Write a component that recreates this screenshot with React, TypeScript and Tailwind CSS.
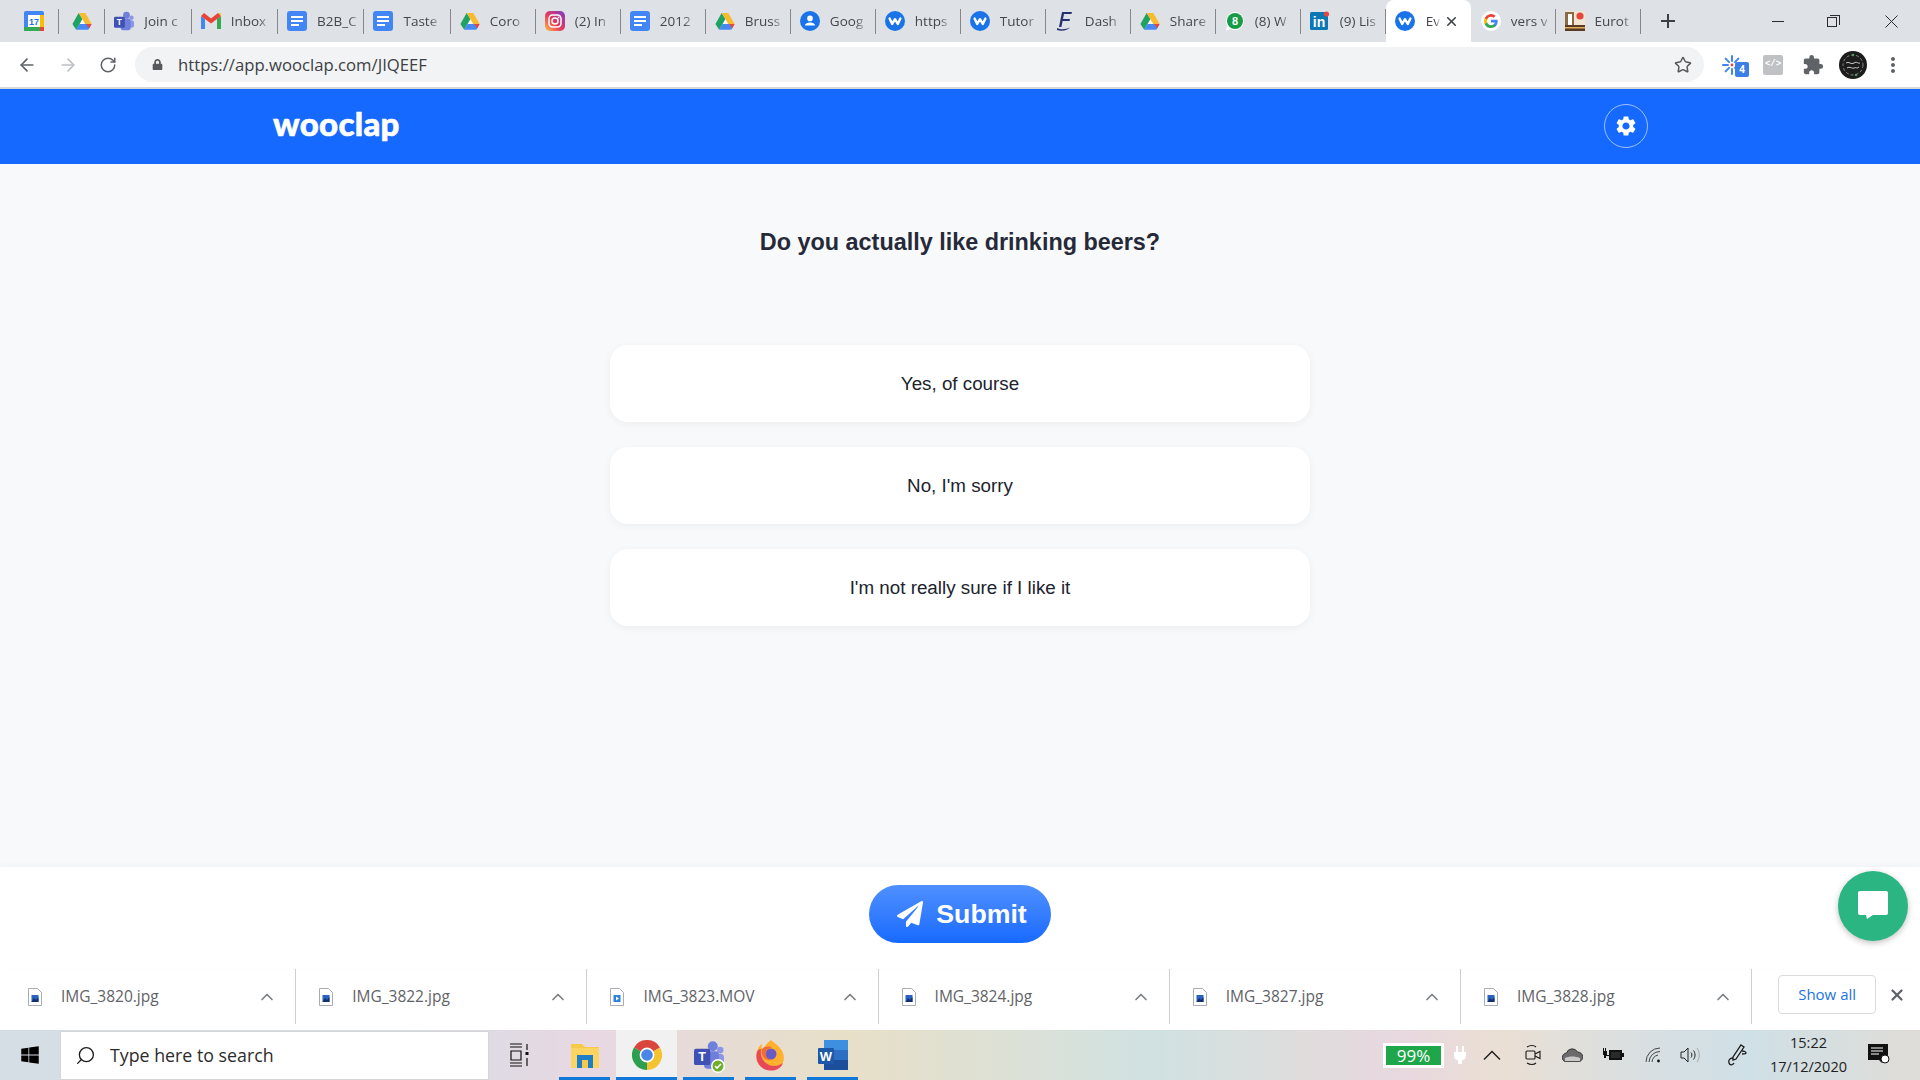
import { ArrowLeft, ArrowRight, ChevronUp, RotateCw, Search, Star, X } from "lucide-react";
import { FaLock, FaPaperPlane, FaWindows } from "react-icons/fa";
import { MdExtension, MdMoreVert, MdSettings } from "react-icons/md";

function Drive() {
  return (
    <svg width="20" height="18" viewBox="0 0 24 21">
      <polygon points="12.5,8 16,14 9,14" fill="#fff" />
      <polygon points="8,1 12.5,8 5,21 0.5,14" fill="#1ea362" />
      <polygon points="8,1 16,1 23.5,14 16,14" fill="#f9bb2d" />
      <polygon points="5,21 9,14 23.5,14 19.5,21" fill="#4688f4" />
      <polygon points="17,14 23.5,14 20.5,19.5" fill="#e8453c" />
    </svg>
  );
}

function Doc() {
  return (
    <svg width="20" height="20" viewBox="0 0 20 20">
      <rect width="20" height="20" rx="3" fill="#4285f4" />
      <rect x="4" y="5" width="12" height="2" fill="#fff" />
      <rect x="4" y="9" width="12" height="2" fill="#fff" />
      <rect x="4" y="13" width="8" height="2" fill="#fff" />
    </svg>
  );
}

function Calendar() {
  return (
    <svg width="20" height="20" viewBox="0 0 20 20">
      <rect width="20" height="20" rx="2" fill="#4285f4" />
      <rect x="4" y="4" width="12" height="12" fill="#fff" />
      <rect x="16" y="4" width="4" height="12" fill="#fbbc04" />
      <rect y="16" width="16" height="4" fill="#34a853" />
      <rect x="16" y="16" width="4" height="4" fill="#ea4335" />
      <text x="10" y="14" textAnchor="middle" fontSize="9" fontWeight="700" fontFamily="Liberation Sans, sans-serif" fill="#1a73e8">17</text>
    </svg>
  );
}

function Teams({ size = 20 }: { size?: number }) {
  return (
    <svg width={size} height={size} viewBox="0 0 24 24">
      <circle cx="15" cy="5" r="4" fill="#6f7fdc" />
      <circle cx="21" cy="8" r="2.6" fill="#8b97e6" />
      <rect x="17" y="11" width="7" height="9" rx="3" fill="#8b97e6" />
      <rect x="8" y="9" width="12" height="14" rx="3" fill="#6f7fdc" />
      <rect x="0" y="7" width="13" height="13" rx="1.5" fill="#3f51b5" />
      <text x="6.5" y="17" textAnchor="middle" fontSize="10" fontWeight="700" fontFamily="Liberation Sans, sans-serif" fill="#fff">T</text>
    </svg>
  );
}

function Gmail() {
  return (
    <svg width="20" height="16" viewBox="0 0 20 16">
      <path d="M0 3v13h4V6z" fill="#4285f4" />
      <path d="M16 6v10h4V3z" fill="#34a853" />
      <path d="M0 3 10 10.5 20 3 17 0 10 5.5 3 0z" fill="#ea4335" />
      <path d="M20 3 17 0h1.5A1.5 1.5 0 0 1 20 1.5z" fill="#fbbc04" />
    </svg>
  );
}

function Instagram() {
  return (
    <svg width="20" height="20" viewBox="0 0 20 20">
      <defs>
        <linearGradient id="ig" x1="0" y1="1" x2="1" y2="0">
          <stop offset="0" stopColor="#fdc14a" />
          <stop offset="0.45" stopColor="#e8385a" />
          <stop offset="1" stopColor="#7d3cc8" />
        </linearGradient>
      </defs>
      <rect width="20" height="20" rx="5" fill="url(#ig)" />
      <rect x="4" y="4" width="12" height="12" rx="3.5" fill="none" stroke="#fff" strokeWidth="1.5" />
      <circle cx="10" cy="10" r="3" fill="none" stroke="#fff" strokeWidth="1.5" />
      <circle cx="13.6" cy="6.4" r="0.9" fill="#fff" />
    </svg>
  );
}

function WooIcon() {
  return (
    <svg width="20" height="20" viewBox="0 0 20 20">
      <circle cx="10" cy="10" r="10" fill="#1a73e8" />
      <polyline points="4.6,7.5 7.2,13 10,8.2 12.8,13 15.4,7.5" fill="none" stroke="#fff" strokeWidth="2.4" strokeLinejoin="round" strokeLinecap="round" />
    </svg>
  );
}

function Contacts() {
  return (
    <svg width="20" height="20" viewBox="0 0 20 20">
      <circle cx="10" cy="10" r="10" fill="#1a73e8" />
      <circle cx="10" cy="7.4" r="2.8" fill="#fff" />
      <path d="M5 14.6c0-2.4 2.6-3.2 5-3.2s5 .8 5 3.2z" fill="#fff" />
    </svg>
  );
}

function DashIcon() {
  return (
    <svg width="16" height="20" viewBox="0 0 16 20">
      <path d="M5 1h10l-.6 2H7l-1 5h7l-.5 2H5.6l-1.2 6H2z" fill="#27306f" />
      <path d="M0 17c4 2 9 1.4 13-.4C11 19 5 21 0 19z" fill="#27306f" />
    </svg>
  );
}

function Whatsapp() {
  return (
    <svg width="20" height="20" viewBox="0 0 20 20">
      <path d="M10 1a9 9 0 0 0-7.7 13.6L1 19.4l4.9-1.3A9 9 0 1 0 10 1z" fill="#fff" />
      <circle cx="10" cy="10" r="8" fill="#169c47" />
      <text x="10" y="14" textAnchor="middle" fontSize="11" fontWeight="700" fontFamily="Liberation Sans, sans-serif" fill="#fff">8</text>
    </svg>
  );
}

function Linkedin() {
  return (
    <svg width="20" height="20" viewBox="0 0 20 20">
      <rect y="1" width="18" height="18" rx="1.5" fill="#0a78b5" />
      <text x="9" y="16" textAnchor="middle" fontSize="14" fontWeight="700" fontFamily="Liberation Sans, sans-serif" fill="#fff">in</text>
      <circle cx="16.5" cy="3" r="2.6" fill="#e8453c" />
    </svg>
  );
}

function Google() {
  return (
    <svg width="20" height="20" viewBox="0 0 20 20">
      <circle cx="10" cy="10" r="10" fill="#fff" />
      <g transform="translate(3 3) scale(0.583)">
        <path d="M23.5 12.3c0-.8-.1-1.6-.2-2.3H12v4.4h6.5a5.5 5.5 0 0 1-2.4 3.6v3h3.9c2.2-2.1 3.5-5.1 3.5-8.7z" fill="#4285f4" />
        <path d="M12 24c3.2 0 6-1.1 8-2.9l-3.9-3c-1.1.7-2.5 1.2-4.1 1.2-3.1 0-5.8-2.1-6.7-5H1.3v3.1A12 12 0 0 0 12 24z" fill="#34a853" />
        <path d="M5.3 14.3a7.2 7.2 0 0 1 0-4.6V6.6h-4a12 12 0 0 0 0 10.8z" fill="#fbbc05" />
        <path d="M12 4.8c1.8 0 3.3.6 4.6 1.8l3.4-3.4A12 12 0 0 0 1.3 6.6l4 3.1c.9-2.9 3.6-4.9 6.7-4.9z" fill="#ea4335" />
      </g>
    </svg>
  );
}

function Eurot() {
  return (
    <svg width="20" height="20" viewBox="0 0 20 20">
      <rect width="20" height="20" fill="#f2e6d2" />
      <rect x="0" y="1" width="9" height="13" fill="#8b6a43" />
      <rect x="3" y="3" width="4" height="11" fill="#fff" />
      <rect y="14" width="20" height="6" fill="#5a3a20" />
      <rect y="16" width="20" height="1.5" fill="#e0b060" />
      <circle cx="15" cy="5" r="3.6" fill="#e8453c" />
    </svg>
  );
}

// the first four titled tabs are a touch wider than the rest in the reference
const tabs = [
  { w: "w-[46.6px]", icon: <Drive />, pinned: true },
  { title: "Join c", w: "w-[86.4px]", icon: <Teams /> },
  { title: "Inbox", w: "w-[86.4px]", icon: <Gmail /> },
  { title: "B2B_C", w: "w-[86.4px]", icon: <Doc /> },
  { title: "Taste", w: "w-[86.4px]", icon: <Doc /> },
  { title: "Coro", icon: <Drive /> },
  { title: "(2) In", icon: <Instagram /> },
  { title: "2012", icon: <Doc /> },
  { title: "Bruss", icon: <Drive /> },
  { title: "Goog", icon: <Contacts /> },
  { title: "https", icon: <WooIcon /> },
  { title: "Tutor", icon: <WooIcon /> },
  { title: "Dash", icon: <DashIcon /> },
  { title: "Share", icon: <Drive /> },
  { title: "(8) W", icon: <Whatsapp /> },
  { title: "(9) Lis", icon: <Linkedin /> },
];

function Tab({ title, icon, w, pinned }: { title?: string; icon: React.ReactNode; w?: string; pinned?: boolean }) {
  return (
    <div className={`relative flex h-[42px] shrink-0 items-center ${pinned ? "justify-center" : "pl-[9px]"} ${w ?? "w-[85px]"}`}>
      <div className="flex w-5 shrink-0 justify-center">{icon}</div>
      {title && (
        <div className="ml-[10px] whitespace-nowrap text-[13.5px] text-[#45474b] [mask-image:linear-gradient(90deg,#000_78%,#0006_100%)]">
          {title}
        </div>
      )}
      <div className="absolute right-0 top-[9px] h-[25px] w-px bg-[#85878b]" />
    </div>
  );
}

function FileIcon({ video }: { video?: boolean }) {
  return (
    <svg width="14" height="18" viewBox="0 0 14 18" className="shrink-0">
      <path d="M.5.5h9l4 4v13H.5z" fill="#fff" stroke="#a9adb3" />
      <rect x="3.5" y="7" width="7" height="7" fill={video ? "#2b83dc" : "#2a62c0"} />
      {video ? <polygon points="6,8.5 9,10.5 6,12.5" fill="#fff" /> : <polygon points="3.5,14 6,10 8,12 10.5,9 10.5,14" fill="#142f70" />}
    </svg>
  );
}

const downloads = [
  { name: "IMG_3820.jpg" },
  { name: "IMG_3822.jpg" },
  { name: "IMG_3823.MOV", video: true },
  { name: "IMG_3824.jpg" },
  { name: "IMG_3827.jpg" },
  { name: "IMG_3828.jpg" },
];

const answers = ["Yes, of course", "No, I'm sorry", "I'm not really sure if I like it"];

function Chrome() {
  return (
    <svg width="30" height="30" viewBox="0 0 30 30">
      <path d="M15 15 2 7.5A15 15 0 0 1 28 7.5z" fill="#d9473c" />
      <path d="M15 15 28 7.5A15 15 0 0 1 15 30z" fill="#f4c430" />
      <path d="M15 15 15 30A15 15 0 0 1 2 7.5z" fill="#2e9e4f" />
      <circle cx="15" cy="15" r="7.4" fill="#fff" />
      <circle cx="15" cy="15" r="5.8" fill="#4a86e8" />
    </svg>
  );
}

function Firefox() {
  return (
    <svg width="30" height="32" viewBox="0 0 30 32">
      <path d="M15 1c3 3 6 4 9 8 5 6 5 13 1 17-4 5-12 6-18 3C1 26-1 19 1 12c1-3 3-6 5-7-1 3 0 5 1 6 1-4 4-7 8-10z" fill="#ffb02e" />
      <path d="M1 13c-2 8 2 16 10 18 7 2 14-1 16-7-5 4-13 4-17 0-4-3-6-8-5-14-2 0-3 1-4 3z" fill="#e8485c" />
      <circle cx="15" cy="15" r="5.5" fill="#6a5bc4" />
      <path d="M6 10c3-3 8-3 10-1-3 0-5 1-6 4-1 4 2 8 6 8-5 1-9-2-10-6-.5-2-.5-3 0-5z" fill="#ef6b3a" />
    </svg>
  );
}

function Word() {
  return (
    <svg width="30" height="32" viewBox="0 0 30 32">
      <rect x="6" y="1" width="24" height="10" fill="#3f8fe0" />
      <rect x="6" y="11" width="24" height="10" fill="#2a6fc4" />
      <rect x="6" y="21" width="24" height="10" fill="#1b4e9b" />
      <rect x="0" y="9" width="16" height="16" rx="1" fill="#1d57a8" />
      <text x="8" y="22" textAnchor="middle" fontSize="13" fontWeight="700" fontFamily="Liberation Sans, sans-serif" fill="#fff">W</text>
    </svg>
  );
}

function Explorer() {
  return (
    <svg width="28" height="26" viewBox="0 0 28 26">
      <path d="M0 2h11l3 3h14v21H0z" fill="#f7c948" />
      <rect x="0" y="6" width="28" height="20" fill="#fcd462" />
      <path d="M6 26V13h16v13h-5v-8h-6v8z" fill="#1c7fc7" />
      <rect x="11" y="18" width="6" height="8" fill="#f7c948" />
    </svg>
  );
}

function TaskSlot({ className, children }: { className: string; children: React.ReactNode }) {
  return <div className={`relative flex h-full shrink-0 items-center justify-center ${className}`}>{children}</div>;
}

function Underline() {
  return <div className="absolute bottom-0 left-0 right-0 h-[3px] bg-[#0f78d8]" />;
}

export default function App() {
  return (
    <div className="flex h-[1080px] w-[1920px] flex-col overflow-hidden bg-white font-['Open_Sans',sans-serif]">
      {/* tab strip */}
      <div className="flex h-[42px] shrink-0 items-center bg-[#dee1e6]">
        <div className="relative flex h-[42px] w-[58.7px] shrink-0 items-center pl-6">
          <Calendar />
          <div className="absolute right-0 top-[9px] h-[25px] w-px bg-[#85878b]" />
        </div>
        {tabs.map((t, i) => (
          <Tab key={i} title={t.title} icon={t.icon} w={t.w} pinned={t.pinned} />
        ))}
        <div className="relative flex h-[42px] w-[85px] shrink-0 items-center rounded-t-lg bg-white pl-[9px]">
          <WooIcon />
          <div className="ml-[11px] w-[15px] whitespace-nowrap text-[13.5px] text-[#45474b] [mask-image:linear-gradient(90deg,#000_60%,transparent)]">Ev</div>
          <X size={15} strokeWidth={2.5} className="ml-[3px] text-[#3c4043]" />
        </div>
        <div className="relative flex h-[42px] w-[84.7px] shrink-0 items-center pl-[10px]">
          <Google />
          <div className="ml-[10px] whitespace-nowrap text-[13.5px] text-[#45474b] [mask-image:linear-gradient(90deg,#000_78%,#0006_100%)]">
            vers v
          </div>
          <div className="absolute right-0 top-[9px] h-[25px] w-px bg-[#85878b]" />
        </div>
        <Tab title="Eurot" icon={<Eurot />} />
        <div className="ml-[18px] text-[#3c4043]">
          <svg width="18" height="18" viewBox="0 0 18 18">
            <path d="M9 2v14M2 9h14" stroke="currentColor" strokeWidth="2" />
          </svg>
        </div>
        <div className="ml-[95px] flex h-3 w-3 items-center">
          <div className="h-px w-3 bg-[#2b2b2b]" />
        </div>
        <div className="relative ml-[43px] h-3 w-[13px]">
          <div className="absolute bottom-0 left-0 h-[10px] w-[10px] border border-[#2b2b2b]" />
          <div className="absolute right-0 top-0 h-[10px] w-[10px] border-r border-t border-[#2b2b2b]" />
        </div>
        <svg width="13" height="13" viewBox="0 0 13 13" className="ml-[45px]">
          <path d="M.5.5l12 12M12.5.5l-12 12" stroke="#2b2b2b" strokeWidth="1" />
        </svg>
      </div>

      {/* toolbar */}
      <div className="flex h-[45px] shrink-0 items-center bg-white pl-[7px]">
        <div className="flex w-10 justify-center text-[#5f6368]"><ArrowLeft size={20} /></div>
        <div className="ml-px flex w-10 justify-center text-[#bcbfc3]"><ArrowRight size={20} /></div>
        <div className="ml-px flex w-[38px] justify-center text-[#5f6368]"><RotateCw size={18} /></div>
        <div className="ml-[8px] flex h-[35px] w-[1569px] shrink-0 items-center rounded-full bg-[#f1f3f4] pl-[17px] pr-[12px]">
          <FaLock size={11} className="text-[#55585c]" />
          <span className="ml-[15px] text-[16.7px] text-[#3c4043]">https://app.wooclap.com/JIQEEF</span>
          <Star size={18} className="ml-auto text-[#55585c]" />
        </div>
        <div className="ml-[8px] flex items-center">
          <div className="relative flex w-10 justify-center">
            <svg width="20" height="20" viewBox="0 0 20 20">
              <g stroke="#3f86f0" strokeWidth="2" strokeLinecap="round">
                <path d="M10 1v5M10 14v5M1 10h5M14 10h5M3.6 3.6l3.5 3.5M12.9 12.9l3.5 3.5M16.4 3.6l-3.5 3.5M7.1 12.9l-3.5 3.5" />
              </g>
              <circle cx="10" cy="10" r="1.4" fill="#e8453c" />
            </svg>
            <div className="absolute left-[23px] top-[7px] flex h-[15px] w-[14px] items-center justify-center rounded-[2px] bg-[#3c7fe6] text-[10px] font-bold text-white">4</div>
          </div>
          <div className="ml-px flex w-10 justify-center">
            <div className="flex h-5 w-5 items-center justify-center rounded-[2px] bg-[#bfc1c4] font-['Liberation_Mono',monospace] text-[9px] font-bold text-white">&lt;/&gt;</div>
          </div>
          <div className="flex w-10 justify-center text-[#5f6368]"><MdExtension size={22} /></div>
          <div className="flex w-10 justify-center">
            <svg width="28" height="28" viewBox="0 0 28 28">
              <circle cx="14" cy="14" r="14" fill="#1c1c1c" />
              <circle cx="14" cy="14" r="10" fill="none" stroke="#8a8a8a" strokeWidth="1" strokeDasharray="3 2" />
              <path d="M7 12c3-2 5 2 8 0s4 1 6 0M8 17c3-2 5 1 7 0s3 1 5-1" fill="none" stroke="#cfcfcf" strokeWidth="1" />
              <circle cx="14" cy="4" r="1.2" fill="#49a35a" />
              <circle cx="17" cy="24" r="1.2" fill="#49a35a" />
            </svg>
          </div>
          <div className="flex w-10 justify-center text-[#5f6368]"><MdMoreVert size={24} /></div>
        </div>
      </div>
      <div className="h-[2px] shrink-0 bg-[#d8d8d8]" />

      {/* app header */}
      <header className="flex h-[75px] shrink-0 items-center justify-between bg-[#1669ff] px-[272px] pb-px">
        <div className="-mt-[5px] ml-px font-['Lato',sans-serif] text-[33px] font-black leading-none tracking-[0.3px] text-white [-webkit-text-stroke:0.6px_white]">wooclap</div>
        <div className="flex h-11 w-11 items-center justify-center rounded-full border border-[#9fc1ff]">
          <MdSettings size={24} className="text-white" />
        </div>
      </header>

      {/* question */}
      <main className="flex flex-1 flex-col items-center bg-[#f8f9fb] pt-[62px] font-['Liberation_Sans',sans-serif]">
        <h1 className="text-[23.4px] font-bold leading-8 text-[#262a38]">Do you actually like drinking beers?</h1>
        <div className="mt-[87px] flex w-[700px] flex-col gap-[25px]">
          {answers.map((a) => (
            <div key={a} className="flex h-[77px] items-center justify-center rounded-[18px] bg-white pt-px text-[18.8px] text-[#20232d] shadow-[0_2px_8px_rgba(0,0,0,0.05)]">
              {a}
            </div>
          ))}
        </div>
      </main>

      {/* submit bar */}
      <div className="relative flex h-[101px] shrink-0 items-start justify-center bg-white pt-[18px] shadow-[0_-2px_6px_rgba(0,0,0,0.03)]">
        <button className="flex h-[58px] w-[182px] items-center justify-center gap-[13px] rounded-full bg-gradient-to-b from-[#4f90ff] to-[#1669ff] pl-1 font-['Liberation_Sans',sans-serif] text-[26.7px] font-bold text-white">
          <FaPaperPlane size={26} />
          Submit
        </button>
        <div className="absolute right-3 top-1 flex h-[70px] w-[70px] items-center justify-center rounded-full bg-[#2bb583] shadow-[0_2px_6px_rgba(0,0,0,0.25)]">
          <svg width="32" height="32" viewBox="0 0 32 32">
            <path d="M3 1h26a2 2 0 0 1 2 2v20a2 2 0 0 1-2 2H16l-6 4-1-4H3a2 2 0 0 1-2-2V3a2 2 0 0 1 2-2z" fill="#fff" />
          </svg>
        </div>
      </div>

      {/* downloads shelf */}
      <div className="flex h-[62px] shrink-0 items-center bg-white pb-[6px] pl-[5px] pt-px">
        {downloads.map((d) => (
          <div key={d.name} className="flex h-[55px] w-[291.2px] shrink-0 items-center border-r border-[#cfcfcf] pl-[23px] pr-[18px]">
            <FileIcon video={d.video} />
            <span className="ml-[19px] text-[15.5px] text-[#5f6368]">{d.name}</span>
            <ChevronUp size={20} className="ml-auto text-[#7b7e82]" />
          </div>
        ))}
        <button className="-mt-[4px] ml-[26px] h-[39px] w-[98px] rounded-[4px] border border-[#dadce0] text-[15px] text-[#1a73e8]">Show all</button>
        <X size={18} strokeWidth={3} className="ml-[12px] -mt-[3px] text-[#5f6368]" />
      </div>

      {/* taskbar */}
      <div className="flex h-[50px] shrink-0 items-center bg-[linear-gradient(90deg,#d5dde5_0%,#d6dde5_21%,#e8d8e2_31%,#e6dcd6_37%,#e8dfc8_44%,#dde1d5_52%,#d0e1e1_60%,#dfdcdc_68%,#e8d8e0_73%,#eadfd4_78%,#d8dfe2_86%,#cfe0e6_91%,#dfdcd8_100%)]">
        <TaskSlot className="w-[60px]"><FaWindows size={20} className="text-black" /></TaskSlot>
        <div className="flex h-[49px] w-[429px] shrink-0 items-center border border-[#d5d5d5] bg-white pl-[14px]">
          <Search size={21} strokeWidth={1.5} className="-scale-x-100 text-[#1c1c1c]" />
          <span className="ml-[14px] text-[17.8px] text-[#2c2c2c]">Type here to search</span>
        </div>
        <TaskSlot className="w-[60px]">
          <svg width="20" height="24" viewBox="0 0 20 24" fill="none" stroke="#111" strokeWidth="1.2">
            <path d="M1 1h12M1 4h12M1 20h12M1 23h12M2 8h10v9H2zM18 1v6M18 15v8" />
            <rect x="16.5" y="9" width="3" height="3" fill="#111" stroke="none" />
          </svg>
        </TaskSlot>
        <TaskSlot className="ml-[10px] w-[51px]"><Explorer /><Underline /></TaskSlot>
        <TaskSlot className="ml-[6px] w-[61px] bg-[#f1f1f2]"><Chrome /><Underline /></TaskSlot>
        <TaskSlot className="ml-[6px] w-[51px]">
          <Teams size={30} />
          <svg width="14" height="14" viewBox="0 0 14 14" className="absolute bottom-[7px] right-[9px]">
            <circle cx="7" cy="7" r="7" fill="#fff" />
            <circle cx="7" cy="7" r="5.5" fill="#6fae2e" />
            <path d="M4 7l2 2 4-4" fill="none" stroke="#fff" strokeWidth="1.6" />
          </svg>
          <Underline />
        </TaskSlot>
        <TaskSlot className="ml-[11px] w-[51px]"><Firefox /><Underline /></TaskSlot>
        <TaskSlot className="ml-[11px] w-[51px]"><Word /><Underline /></TaskSlot>

        <div className="ml-auto flex h-full items-center pr-4">
          <div className="relative flex h-[25px] w-[61px] items-center justify-center border-[3px] border-white bg-[#1fa64a] text-[17px] leading-none text-white">
            99%
          </div>
          <TaskSlot className="ml-[3px] w-[26px]">
            <svg width="12" height="18" viewBox="0 0 12 18" fill="#fff">
              <path d="M2 0h2v6H2zM8 0h2v6H8zM0 6h12v4c0 3-2 4-4 4v4H4v-4c-2 0-4-1-4-4z" />
            </svg>
          </TaskSlot>
          <TaskSlot className="w-[38px]">
            <svg width="18" height="10" viewBox="0 0 18 10" fill="none" stroke="#1a1a1a" strokeWidth="1.3"><path d="M1 9.5 9 1.5l8 8" /></svg>
          </TaskSlot>
          <TaskSlot className="w-[44px]">
            <svg width="16" height="22" viewBox="0 0 16 22" fill="none" stroke="#1a1a1a" strokeWidth="1.1">
              <path d="M2 3c3-2 7-2 9 0M2 19c3 2 7 2 9 0" />
              <rect x="1" y="7" width="9" height="8" rx="1" />
              <path d="M10 10l5-2.5v7L10 12" />
            </svg>
          </TaskSlot>
          <TaskSlot className="w-[34px]">
            <svg width="21" height="14" viewBox="0 0 21 14">
              <path d="M5 14a4.5 4.5 0 0 1-.5-9A6 6 0 0 1 15.5 4 5 5 0 0 1 16 14z" fill="#6b6b6b" stroke="#222" strokeWidth="0.8" />
              <path d="M3 10c4-2 10-2 15 0v3H3z" fill="#c9c9c9" />
            </svg>
          </TaskSlot>
          <TaskSlot className="w-[48px]">
            <svg width="21" height="14" viewBox="0 0 21 14" fill="#111">
              <path d="M0 0h1v3h1V0h1v3h1v4H3v3H1V7H0z" />
              <rect x="3" y="7" width="3" height="1" />
              <rect x="6" y="2" width="13" height="10" />
              <rect x="8" y="4" width="9" height="6" fill="#2a2a2a" />
              <rect x="19" y="5" width="2" height="4" />
            </svg>
          </TaskSlot>
          <TaskSlot className="w-[32px]">
            <svg width="16" height="16" viewBox="0 0 16 16" fill="none" stroke="#444" strokeWidth="1">
              <path d="M1 15A14 14 0 0 1 15 1M4 15A11 11 0 0 1 15 4.5M7 15a8 8 0 0 1 6-7" />
              <circle cx="13.5" cy="14" r="1.4" fill="#111" stroke="none" />
            </svg>
          </TaskSlot>
          <TaskSlot className="w-[42px]">
            <svg width="20" height="18" viewBox="0 0 20 18" fill="none" stroke="#222" strokeWidth="1">
              <path d="M1 6h3l4-4v14l-4-4H1z" />
              <path d="M11 6.5c1.2 1.4 1.2 3.6 0 5M13.5 4.5c2 2.6 2 6.4 0 9" />
              <path d="M17 2c3 4 3 10 0 14" stroke="#a8a8a8" />
            </svg>
          </TaskSlot>
          <TaskSlot className="w-[52px]">
            <svg width="20" height="22" viewBox="0 0 20 22" fill="none" stroke="#1a1a1a" strokeWidth="1.3">
              <path d="M14 1l3 2-8 12-3 1v-3z" />
              <path d="M15 7c2 0 4 1 4 2s-2 1-4 1" />
              <path d="M6 14c-3 0-5 2-4 5s4 2 5 0" />
            </svg>
          </TaskSlot>
          <div className="flex w-[91px] shrink-0 flex-col items-center text-[14.5px] leading-6 text-[#222]">
            <span>15:22</span>
            <span>17/12/2020</span>
          </div>
          <TaskSlot className="w-[50px]">
            <svg width="22" height="22" viewBox="0 0 22 22">
              <path d="M0 0h20v16h-3l-3 3-3-3H0z" fill="#111" />
              <path d="M3 4h12M3 7h12M3 10h8" stroke="#fff" strokeWidth="1" />
              <circle cx="17" cy="15" r="4" fill="#fff" stroke="#111" strokeWidth="1" />
            </svg>
          </TaskSlot>
        </div>
      </div>
    </div>
  );
}
